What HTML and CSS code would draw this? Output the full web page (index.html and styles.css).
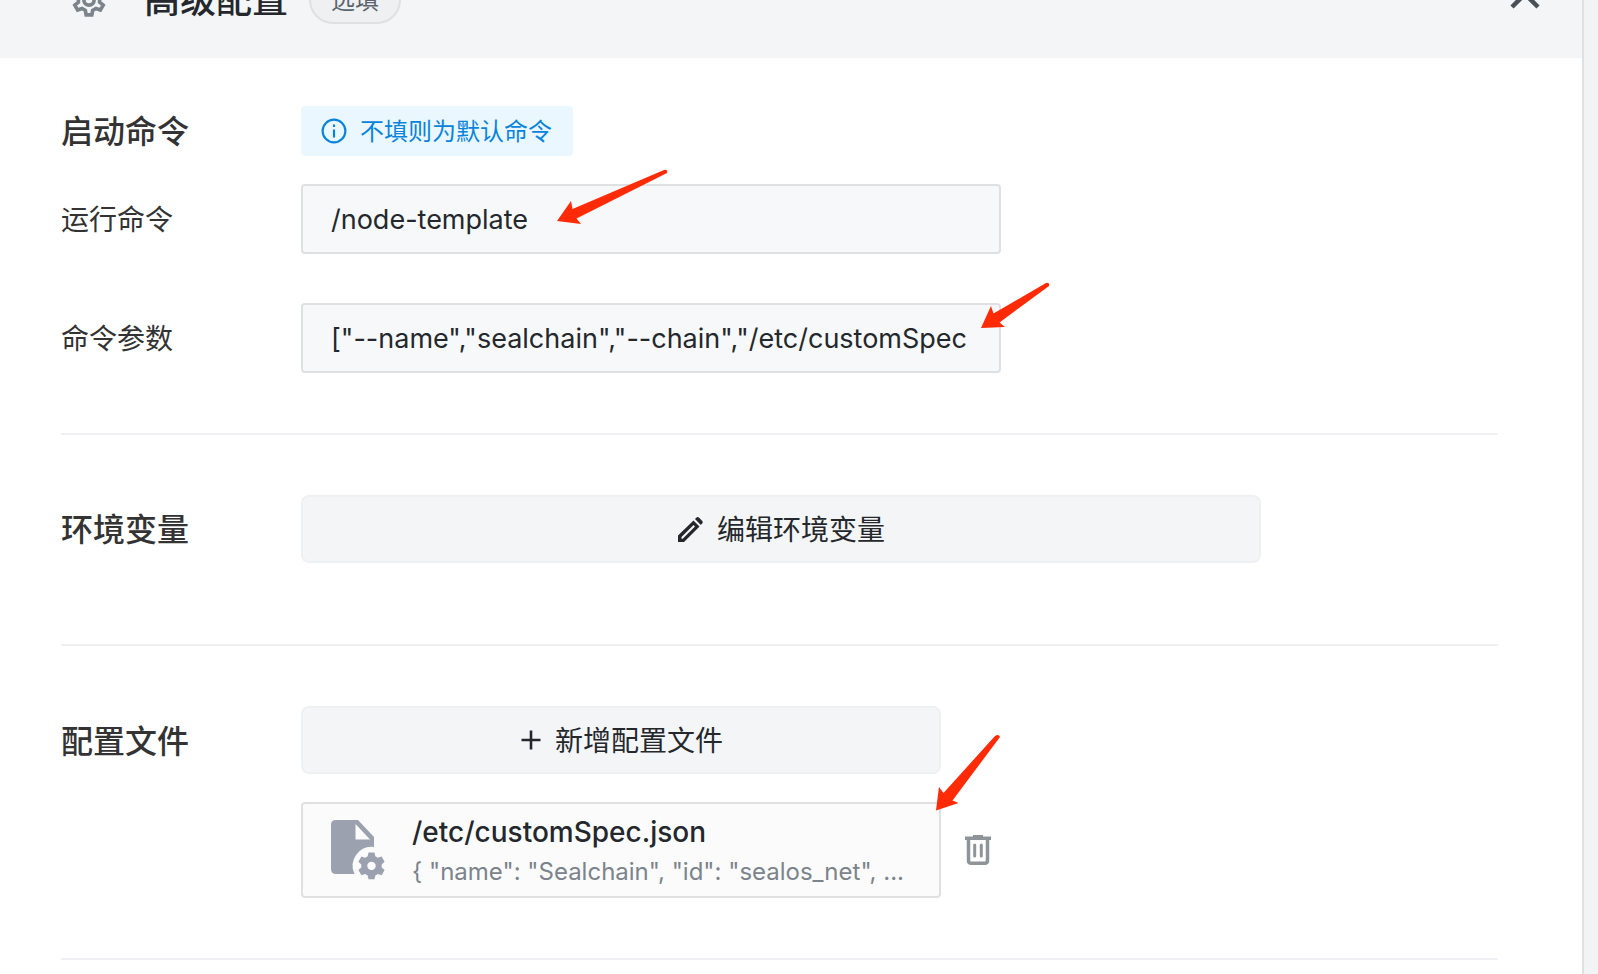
FILE: index.html
```
<!DOCTYPE html>
<html lang="zh-CN">
<head>
<meta charset="utf-8">
<title>高级配置</title>
<link rel="stylesheet" href="styles.css">
</head>
<body>
<main class="panel">
  <header class="panel-header">
    <svg class="gear" viewBox="0 0 24 24" fill="none" stroke="currentColor" stroke-width="2.6" stroke-linejoin="miter" aria-hidden="true">
      <path d="M10 1.5h4l.6 3.2 2.3 1.3 3.1-1.1 2 3.5-2.5 2.1v3l2.5 2.1-2 3.5-3.1-1.1-2.3 1.3-.6 3.2h-4l-.6-3.2-2.3-1.3L4 19.1l-2-3.5 2.5-2.1v-3L2 8.4l2-3.5 3.1 1.1 2.3-1.3z"/>
      <circle cx="12" cy="12" r="3.6"/>
    </svg>
    <h1 class="panel-title">高级配置</h1>
    <span class="pill">选填</span>
    <button class="collapse" type="button" aria-label="收起">
      <svg viewBox="0 0 32 20" fill="none" stroke="currentColor" stroke-width="4.5" aria-hidden="true"><path d="M3 17L16 4l13 13"/></svg>
    </button>
  </header>

  <form class="content">
    <section class="section">
      <div class="row row-tip">
        <h2 class="heading">启动命令</h2>
        <p class="tip">
          <svg viewBox="0 0 24 24" fill="none" stroke="currentColor" stroke-width="2" aria-hidden="true"><circle cx="12" cy="12" r="10.5"/><path d="M12 10.5v7.5M12 6v2.2"/></svg>
          <span class="tip-text">不填则为默认命令</span>
        </p>
      </div>
      <div class="row row-field">
        <label class="label" for="run">运行命令</label>
        <div class="field">
          <input class="input" id="run" type="text" value="/node-template">
          <svg class="arrow arrow-run" viewBox="0 0 112 58" aria-hidden="true"><path d="M1 53L15 33l1.500 8L108 2q4-1 3 3L20.500 50.500l4.500 5.500z"/></svg>
        </div>
      </div>
      <div class="row">
        <label class="label" for="args">命令参数</label>
        <div class="field">
          <input class="input" id="args" type="text" value='["--name","sealchain","--chain","/etc/customSpec'>
          <svg class="arrow arrow-args" viewBox="0 0 70 48" aria-hidden="true"><path d="M1 46L11 24l2.500 7.500L66 1q4-1 3 3L19.500 40.500l5.500 4.500z"/></svg>
        </div>
      </div>
    </section>

    <section class="section section-env">
      <div class="row">
        <h2 class="heading">环境变量</h2>
        <button class="btn btn-env" type="button">
          <svg class="icon-edit" viewBox="0 0 28 28" fill="currentColor" aria-hidden="true"><path fill-rule="evenodd" d="M1 26v-6.500L16.500 4.500l6 6L7 26zM4.500 22.800h1.200L18 10.500l-1.500-1.500L4.500 21z"/><path d="M18 3l1.500-1.500q1.200-1 2.400 0l3.400 3.400q1 1.200 0 2.400L23.800 9z"/></svg>
          编辑环境变量
        </button>
      </div>
    </section>

    <section class="section">
      <div class="row row-top">
        <h2 class="heading heading-btn">配置文件</h2>
        <div class="files">
          <button class="btn" type="button">
            <svg class="icon-add" viewBox="0 0 24 24" fill="none" stroke="currentColor" stroke-width="2.6" aria-hidden="true"><path d="M2.500 11h19M12 1.500v19"/></svg>
            新增配置文件
          </button>
          <div class="file-row">
            <div class="card">
              <svg class="file-icon" viewBox="0 0 54 60" fill="currentColor" aria-hidden="true">
                <path fill-rule="evenodd" d="M5 0h22l16 17v10A19 19 0 0 0 23.500 54H5q-5 0-5-5V5q0-5 5-5zM24.500 4v15.500h14.500z"/>
                <path fill-rule="evenodd" d="M37.500 32.500h6l.8 3.800 2.600 1.500 3.700-1.200 3 5.200-2.900 2.600v3l2.900 2.600-3 5.200-3.700-1.200-2.600 1.500-.8 3.800h-6l-.8-3.800-2.600-1.500-3.700 1.200-3-5.200 2.900-2.600v-3l-2.900-2.600 3-5.200 3.700 1.200 2.600-1.500zM40.500 41.700a4.200 4.200 0 1 0 .01 0z"/>
              </svg>
              <div class="card-text">
                <strong class="file-name">/etc/customSpec.json</strong>
                <span class="file-preview">{ "name": "Sealchain", "id": "sealos_net", ...</span>
              </div>
              <svg class="arrow arrow-file" viewBox="0 0 66 78" aria-hidden="true"><path d="M1 76.500L4 53l4.500 6L60 2q4-2.500 5 1L17.500 66.500l6 2.500z"/></svg>
            </div>
            <button class="remove" type="button" aria-label="删除">
              <svg viewBox="0 0 26 30" fill="none" stroke="currentColor" stroke-width="3.5" aria-hidden="true"><path d="M0 3.200h26M3.500 3v22.500q0 2.700 2.700 2.700h13.600q2.700 0 2.700-2.700V3"/><path d="M8 1.700h10"/><path stroke-width="3" stroke-linecap="round" d="M9.700 10v11M16.300 10v11"/></svg>
            </button>
          </div>
        </div>
      </div>
    </section>
  </form>
</main>
</body>
</html>
```
FILE: styles.css
```
* { box-sizing: border-box; }

body {
  display: flex;
  margin: 0;
  min-height: 100vh;
  overflow: hidden;
  padding-right: 14px;
  background: #f2f3f5;
  color: #24282c;
  font-family: Inter, "Noto Sans CJK SC", sans-serif;
  font-size: 28px;
  line-height: 40px;
}

h1, h2, p { margin: 0; }
svg { display: block; flex: none; }
button, input { font: inherit; color: inherit; }
button { cursor: pointer; }

.panel {
  flex: 1;
  background: #fff;
  border-right: 2px solid #dee0e2;
}

/* The panel is scrolled so that only the lower half of its header shows. */
.panel-header {
  display: flex;
  align-items: center;
  height: 116px;
  margin-top: -58px;
  padding: 0 40px 0 72px;
  background: #f4f5f7;
}
.gear { width: 34px; height: 34px; color: #7b838b; }
.panel-title { margin: 0 21px 0 38px; font-size: 36px; font-weight: 500; }
.pill {
  padding: 3px 20px 1px;
  border: 2px solid #dee0e2;
  border-radius: 24px;
  background: #eff0f1;
  color: #5a646e;
  font-size: 24px;
}
.collapse {
  margin-left: auto;
  padding: 0;
  border: 0;
  background: none;
  color: #485058;
}
.collapse svg { width: 34px; height: 20px; }

.content { padding: 48px 84px 60px 61px; }
.section { padding-bottom: 60px; border-bottom: 2px solid #eff0f3; }
.section + .section { padding-top: 60px; }
.section-env { padding-bottom: 81px; }

.row { display: flex; align-items: center; }
.row-top { align-items: flex-start; }
.row-tip { margin-bottom: 28px; }
.row-field { margin-bottom: 49px; }
.heading { width: 240px; flex: none; padding-top: 2px; color: #333; font-size: 32px; font-weight: 500; }
.heading-btn { line-height: 68px; }
.label { width: 240px; flex: none; padding-top: 2px; color: #333; }

.tip {
  display: flex;
  align-items: center;
  gap: 13px;
  padding: 5px 21px 5px 20px;
  border-radius: 4px;
  background: #ebf7ff;
  color: #0884dd;
  font-size: 24px;
}
.tip svg { width: 26px; height: 26px; }
.tip-text { padding-top: 2px; line-height: 38px; }

.field { position: relative; flex: 0 1 700px; }
.input {
  display: block;
  width: 100%;
  height: 70px;
  padding: 0 28px;
  border: 2px solid #dee0e2;
  border-radius: 4px;
  background: #f7f8fa;
  font-size: 27px;
}

.btn {
  display: flex;
  align-items: center;
  justify-content: center;
  gap: 12px;
  width: 100%;
  height: 68px;
  padding: 2px 6px 0;
  border: 2px solid #eff0f1;
  border-radius: 8px;
  background: #f4f5f7;
}
.btn-env { flex: 0 1 960px; }
.icon-edit { width: 28px; height: 28px; }
.icon-add { width: 24px; height: 24px; }

.files { flex: 0 1 640px; }
.file-row { display: flex; align-items: center; margin: 28px -50px 0 0; }
.card {
  position: relative;
  display: flex;
  align-items: center;
  gap: 27px;
  flex: 1;
  height: 96px;
  padding: 0 28px;
  border: 2px solid #dee0e2;
  border-radius: 4px;
  background: #fbfbfc;
}
.file-icon { width: 54px; height: 60px; color: #9ba1ae; }
.card-text { display: flex; flex-direction: column; padding-top: 4px; white-space: nowrap; }
.file-name { font-weight: 500; }
.file-preview { color: #7b838b; font-size: 24px; }
.remove {
  margin-left: 24px;
  padding: 0;
  border: 0;
  background: none;
  color: #8f9499;
}
.remove svg { width: 26px; height: 30px; }

.arrow { position: absolute; fill: #ff2a06; pointer-events: none; }
.arrow-run { left: 255px; top: -16px; width: 112px; height: 58px; }
.arrow-args { left: 679px; top: -21px; width: 70px; height: 48px; }
.arrow-file { right: -62px; top: -70px; width: 66px; height: 78px; }
```
